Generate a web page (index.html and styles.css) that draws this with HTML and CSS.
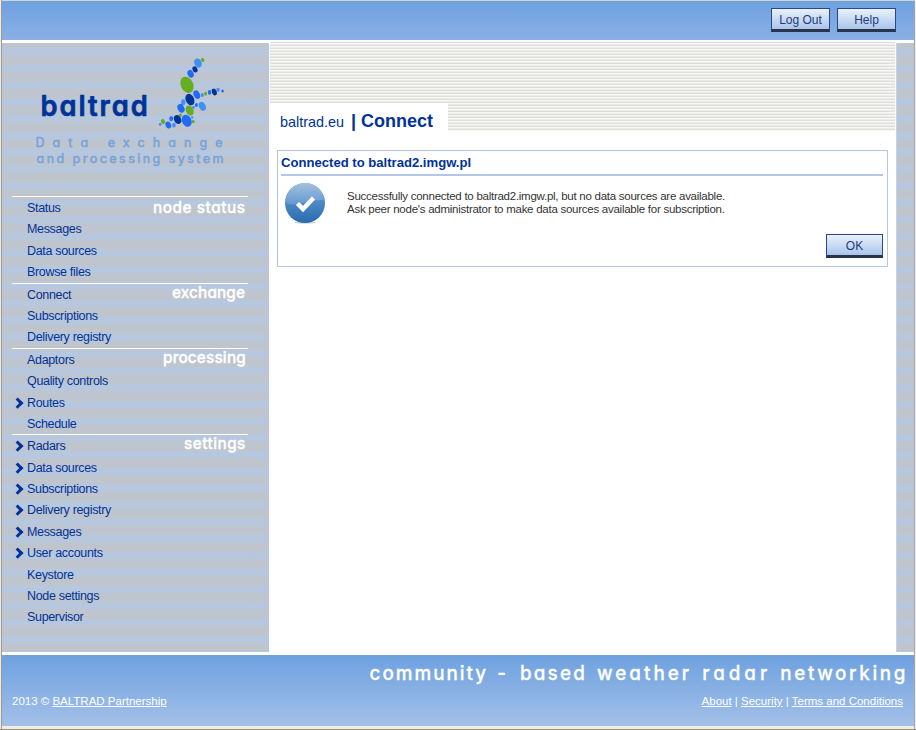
FILE: index.html
```html
<!DOCTYPE html>
<html lang="en">
<head>
<meta charset="utf-8">
<title>BALTRAD | Connect</title>
<link rel="stylesheet" href="styles.css">
</head>
<body>
<div class="page">
  <header class="topbar">
    <button class="btn logout">Log Out</button>
    <button class="btn help">Help</button>
  </header>
  <div class="main">
    <aside class="sidebar">
      <svg class="logo" width="266" height="153" viewBox="2 43 266 153">
        <text class="brand" transform="translate(40.500 116) scale(.94 1)" textLength="114">baltrad</text>
        <g fill="#65ad21">
          <ellipse cx="202.7" cy="60" rx="1.6" ry="2.1" transform="rotate(-25 202.7 60)"/>
          <ellipse cx="187" cy="84.8" rx="6.2" ry="8.5" transform="rotate(-25 187 84.8)"/>
          <ellipse cx="189.7" cy="110.5" rx="3.8" ry="5.2" transform="rotate(-25 189.7 110.5)"/>
          <ellipse cx="205.6" cy="93.8" rx="1.4" ry="2"/>
          <ellipse cx="180.4" cy="115.2" rx="1.4" ry="1.8"/>
          <ellipse cx="163" cy="121.5" rx="2" ry="2.6" transform="rotate(-25 163 121.5)"/>
          <ellipse cx="193.2" cy="121.5" rx="1.5" ry="1.8"/>
        </g>
        <g fill="#3f91f7">
          <ellipse cx="198" cy="63" rx="3.6" ry="4.8" transform="rotate(-25 198 63)"/>
          <ellipse cx="202.3" cy="106.3" rx="3.3" ry="4.7" transform="rotate(-25 202.3 106.3)"/>
          <ellipse cx="183.3" cy="102.2" rx="2.1" ry="2.9"/>
          <ellipse cx="202.4" cy="95.1" rx="1.5" ry="2"/>
          <ellipse cx="218" cy="89.8" rx="1.7" ry="2.1"/>
          <ellipse cx="160.2" cy="124.3" rx="1.4" ry="1.6"/>
          <ellipse cx="173.9" cy="125.2" rx="1.8" ry="2.4"/>
          <ellipse cx="193.5" cy="107.3" rx="1.3" ry="1.6"/>
          <ellipse cx="192.2" cy="117.3" rx="1.1" ry="1.4"/>
        </g>
        <g fill="#1d6bf7">
          <ellipse cx="190.6" cy="73.8" rx="3" ry="4" transform="rotate(-25 190.6 73.8)"/>
          <ellipse cx="196.8" cy="94.7" rx="3.1" ry="4.5" transform="rotate(-25 196.8 94.7)"/>
          <ellipse cx="209.6" cy="92.4" rx="1.7" ry="2.3"/>
          <ellipse cx="222.6" cy="90.9" rx="1.3" ry="1.5"/>
          <ellipse cx="181" cy="108.3" rx="3.3" ry="4.5" transform="rotate(-25 181 108.3)"/>
          <ellipse cx="196.4" cy="105.1" rx="1.5" ry="2"/>
          <ellipse cx="186.7" cy="120.7" rx="4.7" ry="6.3" transform="rotate(-25 186.7 120.7)"/>
          <ellipse cx="171.2" cy="118.6" rx="1.9" ry="2.6"/>
          <ellipse cx="168.3" cy="125" rx="2.7" ry="3.6" transform="rotate(-25 168.3 125)"/>
        </g>
        <g fill="#003399">
          <ellipse cx="195" cy="69.4" rx="2.4" ry="3.2" transform="rotate(-25 195 69.4)"/>
          <ellipse cx="189.9" cy="99.6" rx="4.2" ry="6" transform="rotate(-25 189.9 99.6)"/>
          <ellipse cx="214.3" cy="92" rx="2.4" ry="3.5" transform="rotate(-20 214.3 92)"/>
          <ellipse cx="177.6" cy="119.5" rx="3.5" ry="4.6" transform="rotate(-25 177.6 119.5)"/>
        </g>
        <text class="tagline" x="35.500" y="146.500" textLength="187">Data exchange</text>
        <text class="tagline" x="36.500" y="162.500" textLength="187">and processing system</text>
      </svg>
      <nav>
        <section class="group">
          <svg class="label" width="236" height="22"><text transform="translate(141 16) scale(.93 1)" textLength="99">node status</text></svg>
          <ul><li>Status</li><li>Messages</li><li>Data sources</li><li>Browse files</li></ul>
        </section>
        <section class="group">
          <svg class="label" width="236" height="22"><text transform="translate(160 14) scale(.93 1)" textLength="78.500">exchange</text></svg>
          <ul><li>Connect</li><li>Subscriptions</li><li>Delivery registry</li></ul>
        </section>
        <section class="group">
          <svg class="label" width="236" height="22"><text transform="translate(151 14) scale(.93 1)" textLength="89">processing</text></svg>
          <ul><li>Adaptors</li><li>Quality controls</li><li class="sub">Routes</li><li>Schedule</li></ul>
        </section>
        <section class="group">
          <svg class="label" width="236" height="22"><text transform="translate(172 14) scale(.93 1)" textLength="66">settings</text></svg>
          <ul><li class="sub">Radars</li><li class="sub">Data sources</li><li class="sub">Subscriptions</li><li class="sub">Delivery registry</li><li class="sub">Messages</li><li class="sub">User accounts</li><li>Keystore</li><li>Node settings</li><li>Supervisor</li></ul>
        </section>
      </nav>
    </aside>
    <main class="content">
      <div class="banner">
        <div class="tab"><span class="site">baltrad.eu</span><h1>| Connect</h1></div>
      </div>
      <section class="box">
        <h2>Connected to baltrad2.imgw.pl</h2>
        <div class="message">
          <svg class="ok-icon" width="42" height="42" viewBox="0 0 42 42">
            <defs>
              <linearGradient id="ball" x1="0" y1="0" x2="0" y2="1"><stop offset="0" stop-color="#6fa0d2"/><stop offset=".5" stop-color="#4c88c5"/><stop offset="1" stop-color="#286bad"/></linearGradient>
              <linearGradient id="gloss" x1="0" y1="0" x2="0" y2="1"><stop offset="0" stop-color="#a3c0e0"/><stop offset="1" stop-color="#7fa9d6" stop-opacity=".5"/></linearGradient>
            </defs>
            <ellipse cx="21" cy="39.500" rx="11" ry="1.200" fill="#cfcfcf"/>
            <circle cx="21" cy="20" r="20" fill="url(#ball)"/>
            <path d="M2 20A19 18.500 0 0 1 40 17Q27 17 19 20Q10 23 2 20Z" fill="url(#gloss)"/>
            <path d="M13.500 20.500L19 26L29.500 15" fill="none" stroke="#fff" stroke-width="4.500"/>
          </svg>
          <p>Successfully connected to baltrad2.imgw.pl, but no data sources are available.<br>Ask peer node's administrator to make data sources available for subscription.</p>
        </div>
        <div class="actions"><button class="btn confirm">OK</button></div>
      </section>
    </main>
    <div class="edge"></div>
  </div>
  <footer class="footer">
    <svg class="slogan" width="912" height="34"><text transform="translate(0 25) scale(.94 1)"><tspan x="391" textLength="124">community</tspan> <tspan x="527">-</tspan> <tspan x="551" textLength="69">based</tspan> <tspan x="633" textLength="98">weather</tspan> <tspan x="745" textLength="69">radar</tspan> <tspan x="828" textLength="133">networking</tspan></text></svg>
    <div class="links">
      <span>2013 © <a>BALTRAD Partnership</a></span>
      <span><a>About</a> | <a>Security</a> | <a>Terms and Conditions</a></span>
    </div>
  </footer>
</div>
</body>
</html>
```
FILE: styles.css
```css
* { box-sizing: border-box; }
body {
  margin: 0;
  background: #f0ece2;
  border-bottom: 1px solid #9d9178;
  font-family: "Liberation Sans", Arial, sans-serif;
  color: #333;
}
.page {
  height: 729px;
  padding-bottom: 4px;
  border: 1px solid #a6a6a6;
  border-top-color: #d6d6d3;
  border-bottom: 0;
  border-left: 1px solid #999;
  margin-left: 1px;
  margin-right: 1px;
}
.topbar {
  height: 39px;
  display: flex;
  justify-content: flex-end;
  gap: 7px;
  padding: 7px 18px 0 0;
  background: linear-gradient(#6ea1e0, #8ab0e5);
}
.btn {
  height: 24px;
  padding: 1px 0 0;
  border: 1px solid #29498c;
  border-bottom: 3px solid #29334a;
  background: linear-gradient(#eaf1fb, #a9c5ec);
  color: #1f3a78;
  font: 12px "Liberation Sans", Arial, sans-serif;
}
.logout { width: 59px; }
.help { width: 59px; }
.main {
  height: 613px;
  display: flex;
  border-top: 2px solid #fff;
  background: #fff;
}
.sidebar, .edge {
  margin-top: 1px;
  height: 609px;
  background-color: #b9c6d8;
  background-image:
    repeating-linear-gradient(rgba(194, 196, 198, .55) 0, rgba(194, 196, 198, .55) 3px, rgba(180, 200, 230, .55) 7px, rgba(180, 200, 230, .55) 10px, rgba(194, 196, 198, .55) 14px, rgba(194, 196, 198, .55) 16.8px),
    linear-gradient(#c6c5c2 50%, #aec8ec 50%);
  background-size: 100% 100%, 100% 2px;
}
.sidebar {
  width: 267px;
  border-right: 1px solid #b5c6e2;
}
.logo { display: block; }
.brand, .tagline, .label text, .slogan text {
  font-family: Inter, sans-serif;
  font-feature-settings: "cv11";
  stroke-linejoin: round;
}
.brand { font-size: 29px; font-weight: 600; fill: #039; stroke: #039; stroke-width: .7px; }
.tagline { font-size: 12.5px; fill: #74a3e1; stroke: #74a3e1; stroke-width: .5px; }
nav { padding: 0 0 0 10px; }
.group {
  width: 236px;
  border-top: 1px solid #fff;
  display: grid;
}
.label, .group ul { grid-area: 1 / 1; }
.label { overflow: visible; }
.label text { font-size: 16.5px; font-weight: 500; fill: #fff; stroke: #fff; stroke-width: .4px; }
.group ul { margin: 0; padding: 0; list-style: none; }
.group li {
  height: 21.4px;
  padding-left: 15px;
  font-size: 12.5px;
  letter-spacing: -.33px;
  line-height: 22.4px;
  color: #039;
}
.group li.sub::before {
  content: "";
  display: inline-block;
  width: 4.5px;
  height: 4.5px;
  margin: 0 6px .5px -13.5px;
  border: solid #039;
  border-width: 3px 3px 0 0;
  transform: rotate(45deg);
}
.content { flex: 1; padding: 0 1px; }
.banner {
  height: 89px;
  display: flex;
  align-items: flex-end;
  background: linear-gradient(#dddeda 0 1px, #f8f8f5 1px 2px, #ececea 2px 3px) 0 0 / 100% 3px;
}
.tab {
  display: flex;
  align-items: baseline;
  width: 178px;
  height: 28px;
  padding: 7px 0 0 10px;
  background: #fff;
  color: #039;
  line-height: 23px;
}
.site { font-size: 14.4px; }
.tab h1 { margin: 0 0 0 7px; font-size: 18px; }
.box {
  width: 611px;
  height: 117px;
  margin: 19px 0 0 7px;
  padding: 0 4px 0 3px;
  border: 1px solid #b1c7e8;
}
.box h2 {
  height: 25px;
  margin: 0;
  border-bottom: 2px solid #b1c7e8;
  font-size: 13.1px;
  line-height: 23px;
  color: #039;
}
.message { display: flex; padding: 7px 0 0 3px; }
.message p { margin: 7px 0 0 21px; font-size: 11.5px; letter-spacing: -.26px; line-height: 13px; }
.actions { display: flex; justify-content: flex-end; margin-top: 9px; }
.confirm { width: 57px; }
.edge { width: 18px; border-left: 1px solid #c5d3e8; }
.footer {
  height: 73px;
  border-top: 2px solid #fff;
  background: linear-gradient(#6ea1e0, #a3c0e8);
}
.slogan { display: block; }
.slogan text { font-size: 20px; font-weight: 500; fill: #fff; stroke: #fff; stroke-width: .3px; }
.links {
  display: flex;
  justify-content: space-between;
  padding: 5px 11px 0 10px;
  color: #fff;
  font-size: 11.5px;
  line-height: 14px;
}
.links a { text-decoration: underline; }
```
